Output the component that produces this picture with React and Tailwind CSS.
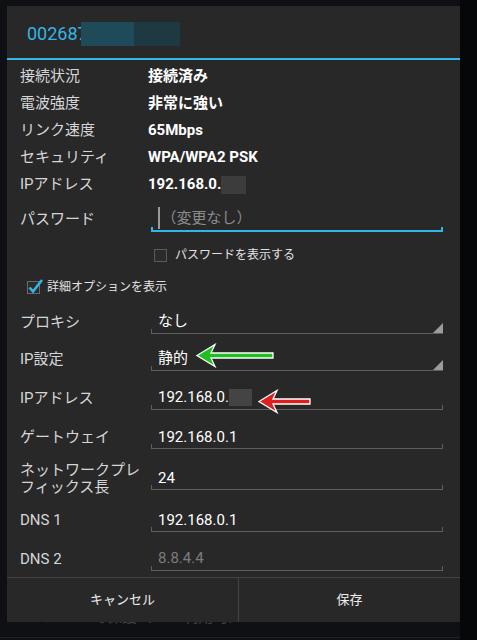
import React from 'react';

const InfoRow = ({ label, children }) => (
  <div className="flex items-center h-[27px] pl-[13px]">
    <div className="w-[128px] text-[15px] text-[#d6d6d6]">{label}</div>
    <div className="text-[15px] font-bold text-white">{children}</div>
  </div>
);

const Field = ({ children, spinner, className = '' }) => (
  <div className={`relative w-[292px] h-[23px] border-b border-[#5e5e5e] flex items-center pl-[7px] ${className}`}>
    {children}
    <span className="absolute left-0 bottom-0 w-px h-[4px] bg-[#5e5e5e]" />
    {spinner ? (
      <svg className="absolute right-0 bottom-0" width="10" height="10" viewBox="0 0 10 10">
        <polygon points="10,0 10,10 0,10" fill="#9c9c9c" />
      </svg>
    ) : (
      <span className="absolute right-0 bottom-0 w-px h-[4px] bg-[#5e5e5e]" />
    )}
  </div>
);

const FieldRow = ({ label, h, children }) => (
  <div className={`flex items-center pl-[13px] ${h}`}>
    <div className="w-[131px] text-[15px] leading-[17px] text-[#d6d6d6]">{label}</div>
    {children}
  </div>
);

const Arrow = ({ color, w, className }) => (
  <svg className={`absolute ${className}`} width={w} height="25" viewBox={`0 0 ${w} 25`}>
    <polygon
      points={`1,12.5 19,1.5 15,10 ${w - 1},10 ${w - 1},15 15,15 19,23.5`}
      fill={color}
      stroke="#ffffff"
      strokeWidth="1.3"
      strokeLinejoin="miter"
    />
  </svg>
);

export default function App() {
  return (
    <div className="relative w-[477px] h-[640px] bg-[#0e1013] overflow-hidden font-[Roboto,'Noto_Sans_CJK_JP',sans-serif]">
      {/* list behind the dialog */}
      <div className="pt-[606px] pl-[14px] text-[15px] text-[#424242]">WPA/WPA2で保護（WPS利用可）</div>
      <div className="mt-[8px] h-px bg-[#1d2024]" />
      <div className="absolute right-0 top-0 w-[17px] h-full bg-[#060708]" />

      {/* dialog */}
      <div className="absolute left-[7px] top-[6px] w-[453px] bg-[#282828]">
        <div className="h-[52px] flex items-center pl-[20px] pt-[3px]">
          <span className="text-[18px] text-[#33b5e5]">002687</span>
          <span className="inline-block w-[53px] h-[24px] bg-[#1e4a59] -ml-[7px]" />
          <span className="inline-block w-[46px] h-[24px] bg-[#1f3942]" />
        </div>
        <div className="h-[2px] bg-[#33b5e5]" />

        <div className="pt-[3px]">
          <InfoRow label="接続状況">接続済み</InfoRow>
          <InfoRow label="電波強度">非常に強い</InfoRow>
          <InfoRow label="リンク速度">65Mbps</InfoRow>
          <InfoRow label="セキュリティ">WPA/WPA2 PSK</InfoRow>
          <InfoRow label="IPアドレス">
            <span className="flex items-center">
              192.168.0.
              <span className="inline-block w-[25px] h-[18px] bg-[#3c3c3c]" />
            </span>
          </InfoRow>
        </div>

        <div className="flex items-center h-[42px] pl-[13px]">
          <div className="w-[131px] text-[15px] text-[#d6d6d6]">パスワード</div>
          <div className="relative w-[292px] h-[25px] border-b-2 border-[#33b5e5] flex items-center pl-[7px]">
            <span className="w-[1.5px] h-[22px] bg-[#9a9a9a] mr-[2px]" />
            <span className="text-[15px] text-[#8c8c8c]">（変更なし）</span>
            <span className="absolute left-0 -bottom-[2px] w-[2px] h-[5px] bg-[#33b5e5]" />
            <span className="absolute right-0 -bottom-[2px] w-[2px] h-[5px] bg-[#33b5e5]" />
          </div>
        </div>

        <div className="flex items-center h-[30px] pl-[147px]">
          <span className="w-[13px] h-[13px] border border-[#5a5a5a] bg-[#2c2c2c]" />
          <span className="ml-[8px] text-[12px] text-[#e2e2e2]">パスワードを表示する</span>
        </div>

        <div className="flex items-center h-[34px] pl-[20px]">
          <span className="relative w-[13px] h-[13px] border border-[#6a6a6a] bg-[#2c2c2c]">
            <svg className="absolute -left-[1px] -top-[5px]" width="17" height="18" viewBox="0 0 17 18">
              <path d="M2.5 10.5 L6 14.5 L15 3" fill="none" stroke="#33b5e5" strokeWidth="2.6" />
            </svg>
          </span>
          <span className="ml-[7px] text-[12px] text-[#e2e2e2]">詳細オプションを表示</span>
        </div>

        <FieldRow label="プロキシ" h="h-[36px]">
          <Field spinner>
            <span className="text-[15px] text-white">なし</span>
          </Field>
        </FieldRow>
        <FieldRow label="IP設定" h="h-[38px]">
          <Field spinner>
            <span className="text-[15px] text-white">静的</span>
          </Field>
        </FieldRow>
        <FieldRow label="IPアドレス" h="h-[40px]">
          <Field>
            <span className="text-[15px] text-white">192.168.0.</span>
            <span className="inline-block w-[23px] h-[17px] bg-[#444444]" />
          </Field>
        </FieldRow>
        <FieldRow label="ゲートウェイ" h="h-[39px]">
          <Field>
            <span className="text-[15px] text-white">192.168.0.1</span>
          </Field>
        </FieldRow>
        <FieldRow
          label={
            <>
              ネットワークプレ
              <br />
              フィックス長
            </>
          }
          h="h-[43px]"
        >
          <Field>
            <span className="text-[15px] text-white">24</span>
          </Field>
        </FieldRow>
        <FieldRow label="DNS 1" h="h-[41px]">
          <Field>
            <span className="text-[15px] text-white">192.168.0.1</span>
          </Field>
        </FieldRow>
        <FieldRow label="DNS 2" h="h-[36px]">
          <Field>
            <span className="text-[15px] text-[#7c7c7c]">8.8.4.4</span>
          </Field>
        </FieldRow>

        <div className="flex h-[45px] border-t border-[#444444]">
          <button className="w-[232px] border-r border-[#444444] text-[13px] text-[#eeeeee]">キャンセル</button>
          <button className="flex-1 text-[13px] text-[#eeeeee]">保存</button>
        </div>

        <Arrow color="#1fbf1f" w={78} className="left-[189px] top-[337px]" />
        <Arrow color="#dd1f1f" w={53} className="left-[251px] top-[383px]" />
      </div>
    </div>
  );
}
